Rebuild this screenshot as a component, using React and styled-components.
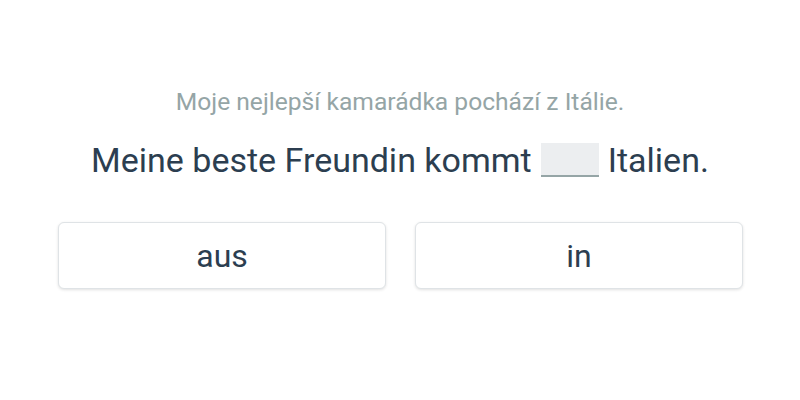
import React from 'react';
import styled, { createGlobalStyle } from 'styled-components';

const GlobalStyle = createGlobalStyle`
  body {
    margin: 0;
    background: #fff;
    font-family: Roboto, "Liberation Sans", sans-serif;
  }
`

const Page = styled.div`
  width: 800px;
  height: 400px;
  display: flex;
  flex-direction: column;
  align-items: center;
  padding-top: 88px;
  box-sizing: border-box;
`

const Hint = styled.p`
  margin: 0;
  font-size: 24.6px;
  line-height: 28px;
  color: #95a5a6;
`

const Sentence = styled.h2`
  margin: 24px 0 0;
  font-size: 34px;
  font-weight: 400;
  line-height: 40px;
  color: #2c3e50;
  display: flex;
  align-items: center;
  gap: 9px;
`

const Blank = styled.span`
  display: inline-block;
  width: 58px;
  height: 34px;
  background: #eceef0;
  border-bottom: 2px solid #95a5a6;
  box-sizing: border-box;
`

const Choices = styled.div`
  display: grid;
  grid-template-columns: 328px 328px;
  gap: 29px;
  margin-top: 42px;
  margin-left: 1px;
`

const Choice = styled.button`
  height: 67px;
  background: #fff;
  border: 1px solid #dfe3e6;
  border-radius: 6px;
  box-shadow: 0 1px 3px rgba(0, 0, 0, 0.12);
  font-family: inherit;
  font-size: 32px;
  color: #2c3e50;
  cursor: pointer;
`

export default function App() {
  return (
    <>
      <GlobalStyle />
      <Page>
        <Hint>Moje nejlepší kamarádka pochází z Itálie.</Hint>
        <Sentence>
          <span>Meine beste Freundin kommt</span>
          <Blank />
          <span>Italien.</span>
        </Sentence>
        <Choices>
          <Choice>aus</Choice>
          <Choice>in</Choice>
        </Choices>
      </Page>
    </>
  )
}
